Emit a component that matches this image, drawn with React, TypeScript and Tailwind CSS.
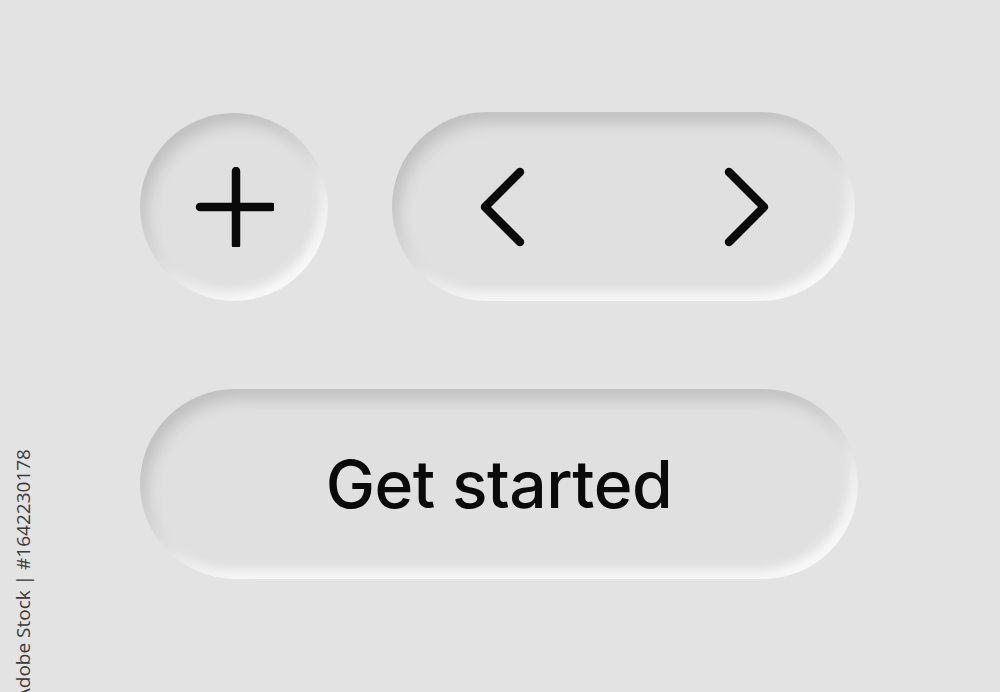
import React from "react";

const inset =
  "shadow-[inset_6px_10px_16px_rgba(0,0,0,0.15),inset_-6px_-8px_12px_rgba(255,255,255,0.85)]";

export default function App() {
  return (
    <div
      className="relative h-[692px] w-[1000px] overflow-hidden bg-[#e3e3e3]"
      style={{ fontFamily: "Inter, 'Noto Sans', sans-serif" }}
    >
      <div className="flex flex-col gap-[88px] pl-[140px] pt-[112px]">
        <div className="flex items-center gap-[64px]">
          <div className={`flex h-[188px] w-[188px] items-center justify-center rounded-full bg-[#e0e0e0] ${inset}`}>
            <svg width="80" height="80" viewBox="0 0 80 80" fill="none" stroke="#0a0a0a" strokeWidth="8.5" strokeLinecap="round">
              <path d="M42 4v74M6 40h72" />
            </svg>
          </div>
          <div className={`flex h-[189px] w-[463px] items-center justify-between rounded-full bg-[#e0e0e0] pl-[86px] pr-[84px] ${inset}`}>
            <svg width="48" height="80" viewBox="0 0 48 80" fill="none" stroke="#0a0a0a" strokeWidth="8.5" strokeLinecap="round" strokeLinejoin="round">
              <path d="M42 5L7 40l35 35" />
            </svg>
            <svg width="48" height="80" viewBox="0 0 48 80" fill="none" stroke="#0a0a0a" strokeWidth="8.5" strokeLinecap="round" strokeLinejoin="round">
              <path d="M6 5l35 35L6 75" />
            </svg>
          </div>
        </div>
        <div className={`flex h-[190px] w-[718px] items-center justify-center rounded-full bg-[#e0e0e0] ${inset}`}>
          <span className="text-[66px] font-medium leading-none tracking-[-0.5px] text-[#0a0a0a]">Get started</span>
        </div>
      </div>
      <div
        className="absolute left-[13px] top-[449px] rotate-180 whitespace-nowrap text-[19px] leading-[21px] text-[#3a3a3a] [writing-mode:vertical-rl]"
        style={{ fontFamily: "'Open Sans', sans-serif" }}
      >
        Adobe Stock | #1642230178
      </div>
    </div>
  );
}
